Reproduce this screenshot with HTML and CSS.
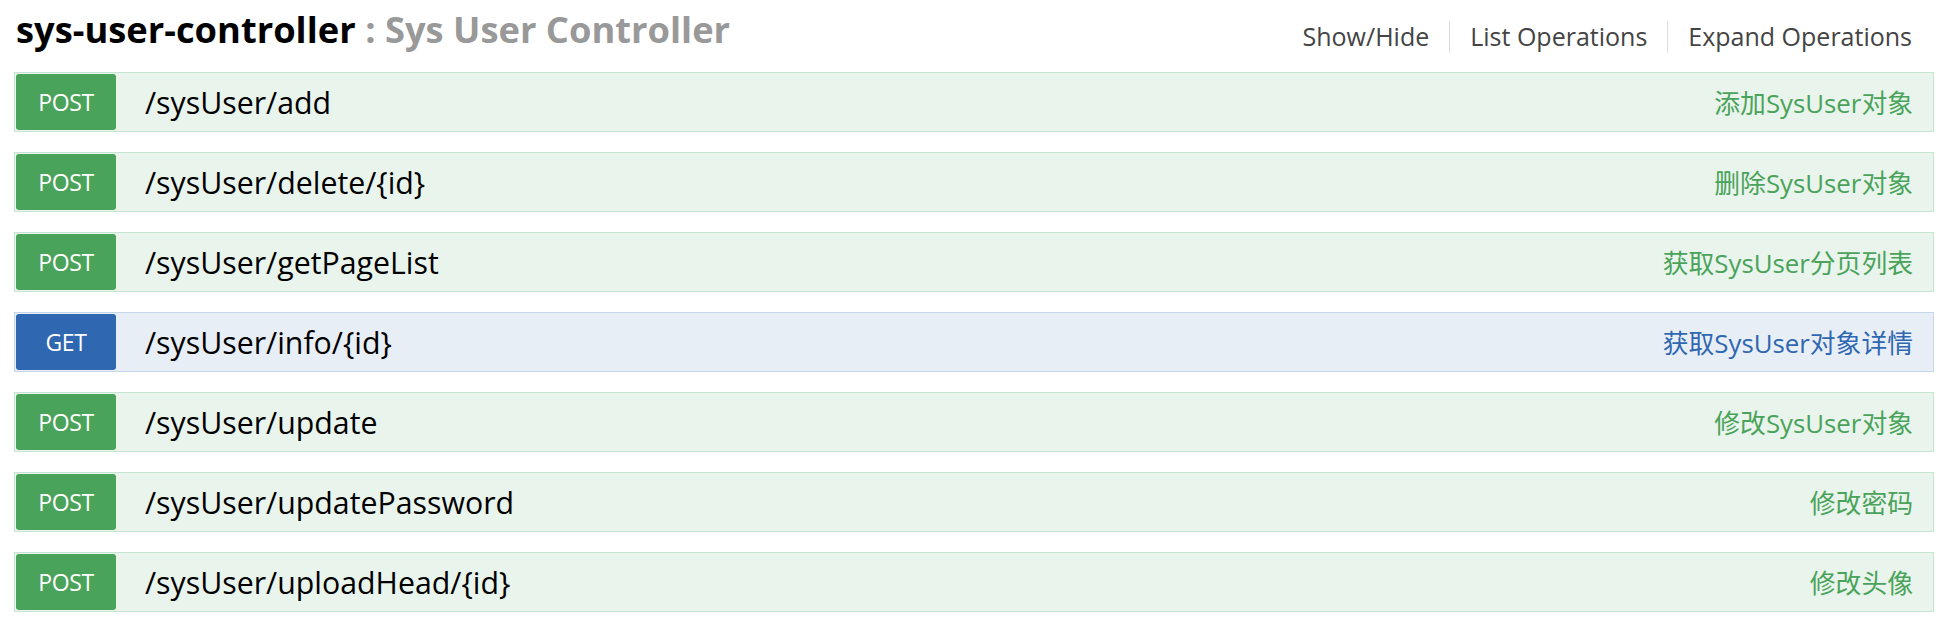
FILE: index.html
```html
<!DOCTYPE html>
<html lang="zh">
<head>
<meta charset="utf-8">
<title>sys-user-controller</title>
<link rel="stylesheet" href="styles.css">
</head>
<body>
<div class="resource">
  <div class="header">
    <h2 class="title"><span class="name">sys-user-controller</span><span class="desc"> : Sys User Controller</span></h2>
    <ul class="options">
      <li class="opt">Show/Hide</li>
      <li class="opt">List Operations</li>
      <li class="opt">Expand Operations</li>
    </ul>
  </div>
  <ul class="ops">
    <li class="op post"><span class="method">POST</span><span class="path">/sysUser/add</span><span class="summary">添加SysUser对象</span></li>
    <li class="op post"><span class="method">POST</span><span class="path">/sysUser/delete/{id}</span><span class="summary">删除SysUser对象</span></li>
    <li class="op post"><span class="method">POST</span><span class="path">/sysUser/getPageList</span><span class="summary">获取SysUser分页列表</span></li>
    <li class="op get"><span class="method">GET</span><span class="path">/sysUser/info/{id}</span><span class="summary">获取SysUser对象详情</span></li>
    <li class="op post"><span class="method">POST</span><span class="path">/sysUser/update</span><span class="summary">修改SysUser对象</span></li>
    <li class="op post"><span class="method">POST</span><span class="path">/sysUser/updatePassword</span><span class="summary">修改密码</span></li>
    <li class="op post"><span class="method">POST</span><span class="path">/sysUser/uploadHead/{id}</span><span class="summary">修改头像</span></li>
  </ul>
</div>
</body>
</html>
```

FILE: styles.css
```css
html, body {
  margin: 0;
  padding: 0;
  background: #fff;
}
body {
  font-family: "Open Sans", "Noto Sans CJK SC", sans-serif;
  color: #000;
}
.resource {
  margin: 0 16px 0 14px;
}
.header {
  display: flex;
  justify-content: space-between;
  align-items: flex-start;
  height: 72px;
}
.title {
  margin: 0;
  padding: 4px 0 0 2px;
  font-size: 36.3px;
  line-height: 50px;
  font-weight: 700;
  letter-spacing: 0;
}
.title .name { color: #000; }
.title .desc { color: #999; }
.options {
  list-style: none;
  margin: 21px 0 0 0;
  padding: 0;
  display: flex;
}
.opt {
  font-size: 25px;
  line-height: 30px;
  padding: 0 20px 2px 20px;
  color: #444;
}
.opt + .opt {
  border-left: 1px solid #ddd;
}
.opt:last-child {
  padding-right: 22px;
}
.ops {
  list-style: none;
  margin: 0;
  padding: 0;
  display: flex;
  flex-direction: column;
  gap: 20px;
}
.op {
  display: flex;
  align-items: center;
  height: 60px;
  box-sizing: border-box;
  padding: 1px;
  border: 1px solid #c6e5d0;
  background: #e9f4ec;
}
.method {
  width: 100px;
  height: 56px;
  flex: none;
  border-radius: 3px;
  color: #fff;
  font-size: 23px;
  letter-spacing: -0.4px;
  line-height: 56px;
  text-align: center;
  background: #4aa35a;
}
.path {
  margin-left: 29px;
  font-size: 30.3px;
  color: #000;
  flex: 1;
}
.summary {
  font-size: 25.8px;
  margin-right: 19px;
  color: #4aa35a;
}
.op.get {
  background: #e8eef6;
  border-color: #c7d7ea;
}
.op.get .method { background: #2f67b0; }
.op.get .summary { color: #2f67b0; }
```
